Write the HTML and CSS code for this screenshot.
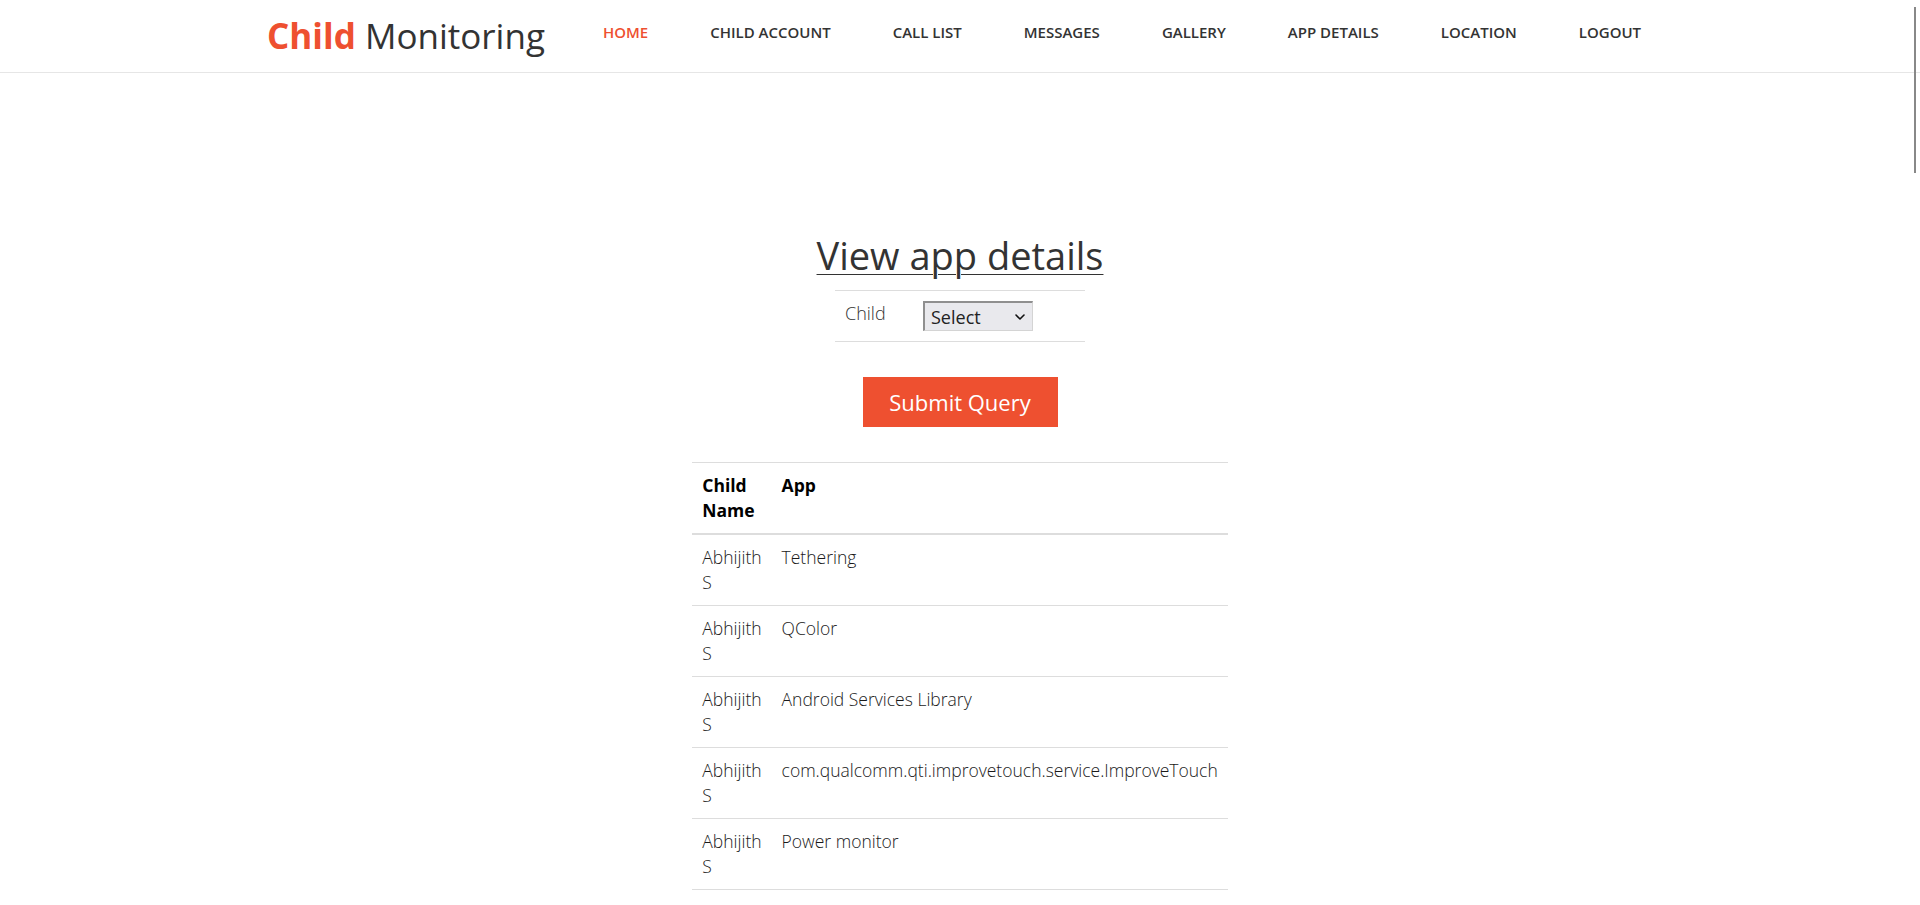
FILE: index.html
```html
<!DOCTYPE html>
<html lang="en">
<head>
<meta charset="utf-8">
<title>Child Monitoring - View app details</title>
<link rel="stylesheet" href="styles.css">
</head>
<body>
<header class="site-header">
  <div class="header-inner">
    <a class="logo" href="#"><span class="logo-accent">Child</span> Monitoring</a>
    <nav class="main-nav">
      <a class="nav-link active" href="#">HOME</a>
      <a class="nav-link" href="#">CHILD ACCOUNT</a>
      <a class="nav-link" href="#">CALL LIST</a>
      <a class="nav-link" href="#">MESSAGES</a>
      <a class="nav-link" href="#">GALLERY</a>
      <a class="nav-link" href="#">APP DETAILS</a>
      <a class="nav-link" href="#">LOCATION</a>
      <a class="nav-link" href="#">LOGOUT</a>
    </nav>
  </div>
</header>

<main class="content">
  <h2 class="page-title">View app details</h2>
  <form class="query-form">
    <table class="form-table">
      <tr>
        <td class="form-label">Child</td>
        <td class="form-field">
          <span class="select-wrap">
            <select class="child-select">
              <option>Select</option>
            </select>
            <svg class="select-chevron" width="10" height="6" viewBox="0 0 10 6" aria-hidden="true">
              <path d="M1 1 L5 5 L9 1" fill="none" stroke="#111" stroke-width="1.6" stroke-linecap="round" stroke-linejoin="round"/>
            </svg>
          </span>
        </td>
      </tr>
    </table>
    <button type="button" class="submit-btn">Submit Query</button>
  </form>

  <table class="data-table">
    <thead>
      <tr><th>Child Name</th><th>App</th></tr>
    </thead>
    <tbody>
      <tr><td>Abhijith S</td><td>Tethering</td></tr>
      <tr><td>Abhijith S</td><td>QColor</td></tr>
      <tr><td>Abhijith S</td><td>Android Services Library</td></tr>
      <tr><td>Abhijith S</td><td>com.qualcomm.qti.improvetouch.service.ImproveTouch</td></tr>
      <tr><td>Abhijith S</td><td>Power monitor</td></tr>
    </tbody>
  </table>
</main>

<div class="scroll-thumb"></div>
</body>
</html>
```

FILE: styles.css
```css
html, body {
  margin: 0;
  padding: 0;
}

body {
  font-family: "Open Sans", "Liberation Sans", sans-serif;
  color: #333;
  background: #fff;
  overflow: hidden;
}

a {
  text-decoration: none;
}

.site-header {
  height: 72px;
  border-bottom: 1px solid #e6e6e6;
}

.header-inner {
  width: 1400px;
  margin: 0 auto;
  padding-left: 7px;
  box-sizing: border-box;
  display: flex;
  align-items: flex-start;
}

.logo {
  font-size: 35px;
  line-height: 72px;
  color: #333;
  white-space: nowrap;
}

.logo-accent {
  color: #ee5030;
  font-weight: 700;
}

.main-nav {
  display: flex;
  gap: 62px;
  margin-left: 58px;
}

.nav-link {
  font-size: 15px;
  font-weight: 600;
  line-height: 64px;
  color: #333;
  white-space: nowrap;
}

.nav-link.active {
  color: #ee5030;
}

.content {
  display: flex;
  flex-direction: column;
  align-items: center;
}

.page-title {
  margin: 159px 0 0;
  font-size: 38px;
  line-height: 46px;
  font-weight: 400;
  color: #333;
  text-decoration: underline;
  text-decoration-thickness: 1px;
  text-underline-offset: 4px;
}

.query-form {
  display: flex;
  flex-direction: column;
  align-items: center;
}

.form-table {
  width: 250px;
  margin-top: 12px;
  border-collapse: collapse;
}

.form-table td {
  padding: 10px;
  border-top: 1px solid #ddd;
  border-bottom: 1px solid #ddd;
  vertical-align: top;
  font-size: 18px;
  line-height: 25px;
  font-weight: 300;
}

.form-label {
  width: 58px;
}

.select-wrap {
  position: relative;
  display: block;
  width: 110px;
  height: 30px;
}

.child-select {
  display: block;
  width: 110px;
  height: 30px;
  -webkit-appearance: none;
  appearance: none;
  font-family: "Open Sans", "Liberation Sans", sans-serif;
  font-size: 18px;
  color: #222;
  background-color: #e9e9ed;
  border-style: solid;
  border-width: 2px 1px 1px 2px;
  border-color: #8f8f8f #d4d4d4 #d4d4d4 #8f8f8f;
  border-radius: 0;
  padding: 0 6px;
}

.select-chevron {
  position: absolute;
  right: 8px;
  top: 13px;
  pointer-events: none;
}

.submit-btn {
  margin-top: 35px;
  height: 50px;
  width: 195px;
  padding: 0;
  border: none;
  background: #ee5030;
  color: #fff;
  font-family: "Open Sans", "Liberation Sans", sans-serif;
  font-size: 22px;
  font-weight: 400;
  cursor: pointer;
}

.data-table {
  width: 1px;
  margin-top: 35px;
  border-collapse: collapse;
  border-bottom: 1px solid #ddd;
}

.data-table th,
.data-table td {
  padding: 10px;
  text-align: left;
  vertical-align: top;
  font-size: 17.5px;
  line-height: 25px;
  border-top: 1px solid #ddd;
}

.data-table th {
  font-weight: 700;
  color: #000;
  border-bottom: 2px solid #ddd;
}

.data-table td {
  font-weight: 300;
  color: #1a1a1a;
}

.scroll-thumb {
  position: fixed;
  top: 7px;
  right: 4px;
  width: 2px;
  height: 166px;
  background: #888;
}
```
